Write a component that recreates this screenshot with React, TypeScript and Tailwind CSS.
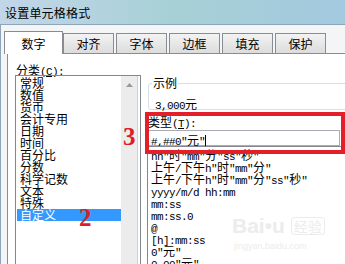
import React from "react";

const cjk = "font-['Noto_Sans_CJK_SC',sans-serif]";

// SimSun-like run: ascii is half width (6px), hanzi full width (12px)
function Mixed({ text }: { text: string }) {
  const runs = text.match(/[\x00-\x7f]+|[^\x00-\x7f]+/g) ?? [];
  return (
    <>
      {runs.map((r, i) =>
        /^[\x00-\x7f]/.test(r) ? (
          <span key={i} className="whitespace-pre font-['Liberation_Mono',monospace] text-[11px] tracking-[-0.6px]">
            {r}
          </span>
        ) : (
          <span key={i} className={`${cjk} text-[12px]`}>
            {r}
          </span>
        )
      )}
    </>
  );
}

const categories = ["常规", "数值", "货币", "会计专用", "日期", "时间", "百分比", "分数", "科学记数", "文本", "特殊", "自定义"];

const formats = [
  'hh"时"mm"分"ss"秒"',
  '上午/下午h"时"mm"分"',
  '上午/下午h"时"mm"分"ss"秒"',
  "yyyy/m/d hh:mm",
  "mm:ss",
  "mm:ss.0",
  "@",
  "[h]:mm:ss",
  '0"元"',
  '0.00"元"',
];

const tabs = ["对齐", "字体", "边框", "填充", "保护"];

export default function App() {
  return (
    <div className={`relative w-[345px] h-[264px] overflow-hidden flex flex-col text-black ${cjk}`}>
      {/* title bar */}
      <div className="h-[24px] shrink-0 pl-[5px] pt-[6px] text-[12px] leading-[13px] tracking-[0.2px] bg-gradient-to-r from-[#c2d6e9] via-[#a7d0d6] to-[#a2c9de]">
        设置单元格格式
      </div>

      <div className="flex-1 flex">
        <div className="w-[4px] bg-gradient-to-b from-[#b4cfe2] to-[#9fc0da]" />
        <div className="flex-1 flex flex-col border-l border-t border-[#8ea4b8] bg-[#f4f5f6]">
          {/* tabs */}
          <div className="relative z-10 flex items-end pl-[3px] pt-[6px] text-[12px]">
            <div className="-mb-px h-[23px] w-[59px] flex items-center justify-center border border-b-0 border-[#898c95] bg-white pt-[1px]">
              数字
            </div>
            {tabs.map((t, i) => (
              <div
                key={t}
                className={`h-[20px] w-[51px] flex items-center justify-center border border-b-0 border-[#898c95] bg-gradient-to-b from-[#f3f3f3] to-[#dcdcdc] ${
                  i === 0 ? "" : "ml-[2px]"
                }`}
              >
                {t}
              </div>
            ))}
          </div>

          {/* tab page */}
          <div className="flex-1 ml-[6px] flex border-l border-t border-[#898c95] bg-white">
            {/* category column */}
            <div className="flex flex-col pl-[7px] pt-[8px]">
              <div className="ml-[1px] h-[12px] leading-[12px]">
                <Mixed text="分类(" />
                <span className="underline whitespace-pre font-['Liberation_Mono',monospace] text-[11px] tracking-[-0.6px]">C</span>
                <Mixed text="):" />
              </div>
              <div className="mt-[1px] flex-1 w-[126px] flex border border-b-0 border-[#828790]">
                <div className="flex-1 pt-[1px] pl-[1px]">
                  {categories.map((c) => (
                    <div
                      key={c}
                      className={`h-[12px] leading-[12px] pl-[3px] text-[12px] ${c === "自定义" ? "bg-[#3399ff] text-white" : ""}`}
                    >
                      {c}
                    </div>
                  ))}
                </div>
                <div className="w-[17px] mr-[2px] bg-[#ececec] border-r border-[#d0d0d0]">
                  <div className="h-[17px] flex items-center justify-center">
                    <svg width="7" height="4" viewBox="0 0 7 4">
                      <path d="M0 4 L3.5 0 L7 4 Z" fill="#9a9a9a" />
                    </svg>
                  </div>
                </div>
              </div>
            </div>

            {/* right column */}
            <div className="flex flex-col pl-[6px] w-[210px]">
              <div className="relative ml-[1px] mt-[29px] h-[27px] w-[202px] border border-[#d5dfe5] rounded-[3px] pl-[6px] pt-[12px]">
                <span className="absolute -top-[7px] left-[3px] bg-white px-[1px] text-[12px] leading-[12px]">示例</span>
                <div className="h-[12px] leading-[12px]">
                  <Mixed text="3,000元" />
                </div>
              </div>

              <div className="mt-[4px] ml-[1px] h-[12px] leading-[12px]">
                <Mixed text="类型(" />
                <span className="underline whitespace-pre font-['Liberation_Mono',monospace] text-[11px] tracking-[-0.6px]">T</span>
                <Mixed text="):" />
              </div>
              <div className="mt-[4px] ml-[1px] h-[16px] w-[192px] border border-[#abadb3] pl-[2px] leading-[15px]">
                <Mixed text={'#,##0"元"'} />
                <span className="inline-block w-px h-[11px] bg-black align-[-1px]" />
              </div>

              <div className="flex-1 border-l border-t border-[#828790] pl-[3px]">
                {formats.map((f) => (
                  <div key={f} className="h-[12px] leading-[12px] whitespace-pre">
                    <Mixed text={f} />
                  </div>
                ))}
              </div>
            </div>
          </div>
        </div>
      </div>

      {/* watermark */}
      <div className="absolute left-[232px] top-[215px] flex flex-col items-start text-[#ececec] pointer-events-none">
        <div className="flex items-center gap-[6px]">
          <span className="font-['Liberation_Sans',sans-serif] font-bold text-[21px] leading-[22px]">Bai&#x2022;u</span>
          <span className="border border-[#ececec] rounded-[3px] px-[2px] text-[14px] leading-[16px]">经验</span>
        </div>
        <span className="font-['Liberation_Sans',sans-serif] text-[9px] leading-[10px] mt-[4px] ml-[2px]">jingyan.baidu.com</span>
      </div>

      {/* annotations */}
      <span className="absolute left-[9px] top-[29px] font-['Liberation_Serif',serif] font-bold text-[27px] leading-[27px] text-[#dd1c24]">1</span>
      <span className="absolute left-[79px] top-[205px] font-['Liberation_Serif',serif] font-bold text-[25px] leading-[25px] text-[#dd1c24]">2</span>
      <span className="absolute left-[123px] top-[124px] font-['Liberation_Serif',serif] font-bold text-[25px] leading-[25px] text-[#dd1c24]">3</span>
      <div className="absolute left-[145px] top-[112px] w-[200px] h-[42px] border-[4px] border-[#e3202a]" />
    </div>
  );
}
